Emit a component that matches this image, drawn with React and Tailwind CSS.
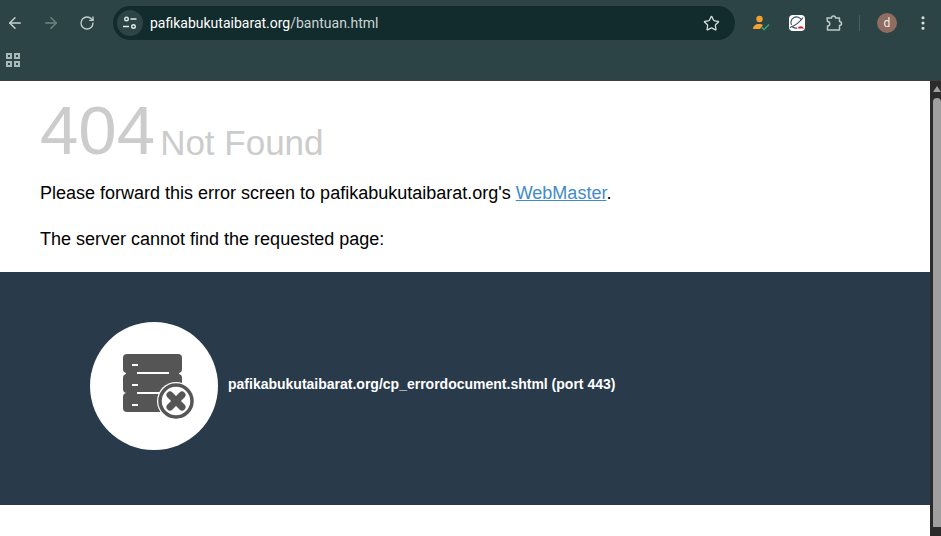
import React from "react";
import { ArrowLeft, ArrowRight, RotateCw, Star, EllipsisVertical } from "lucide-react";

function ServerIcon() {
  return (
    <svg width="72" height="66" viewBox="0 0 72 66" className="block">
      <rect x="0" y="0" width="59" height="19" rx="4" fill="#555555" />
      <rect x="0" y="20" width="59" height="19" rx="4" fill="#555555" />
      <rect x="0" y="39" width="59" height="19" rx="4" fill="#555555" />
      <rect x="3" y="15" width="53" height="8" fill="#555555" />
      <rect x="3" y="35" width="53" height="8" fill="#555555" />
      <rect x="14" y="18" width="32" height="2" fill="#ffffff" />
      <rect x="14" y="38" width="32" height="2" fill="#ffffff" />
      <rect x="9" y="10" width="6" height="2" fill="#ffffff" />
      <rect x="9" y="30" width="6" height="2" fill="#ffffff" />
      <rect x="9" y="50" width="6" height="2" fill="#ffffff" />
      <circle cx="53" cy="47" r="19" fill="#ffffff" />
      <circle cx="53" cy="47" r="16" fill="none" stroke="#555555" strokeWidth="3.5" />
      <path d="M47 41 L59 53 M59 41 L47 53" stroke="#555555" strokeWidth="7" strokeLinecap="round" />
    </svg>
  );
}

export default function App() {
  return (
    <div className="w-[941px] h-[536px] overflow-hidden flex flex-col bg-white font-['Liberation_Sans',Arial,sans-serif]">
      <header className="h-[81px] shrink-0 bg-[#2c4445] border-b border-b-[#3a3f3f] flex flex-col">
        <div className="h-[46px] flex items-center pl-[6px] pr-[8px]">
          <ArrowLeft size={18} strokeWidth={2} className="text-[#c3d0cf]" />
          <ArrowRight size={18} strokeWidth={2} className="text-[#6f8281] ml-[18px]" />
          <RotateCw size={16} strokeWidth={2} className="text-[#c3d0cf] ml-[19px]" />
          <div className="ml-[18px] w-[622px] h-[34px] rounded-full bg-[#122b2c] flex items-center pl-[4px] pr-[15px]">
            <div className="w-[26px] h-[26px] rounded-full bg-[#2c4445] flex items-center justify-center">
              <svg width="14" height="14" viewBox="0 0 14 14" fill="none" stroke="#dfe8e7" strokeWidth="1.4">
                <circle cx="3.5" cy="3" r="1.8" />
                <path d="M7.5 3h6M0 10.5h6" />
                <circle cx="10.5" cy="10.5" r="1.8" />
              </svg>
            </div>
            <div className="ml-[7px] text-[14px] text-[#c9d6d5] font-['Roboto',sans-serif] leading-none">
              <span className="text-white">pafikabukutaibarat.org</span>/bantuan.html
            </div>
            <Star size={17} strokeWidth={1.8} className="text-[#d5dfde] ml-auto" />
          </div>
          <svg width="18" height="18" viewBox="0 0 18 18" className="ml-[17px]">
            <circle cx="7.5" cy="5" r="3.2" fill="#f5a030" />
            <path d="M1 15c0-3 2.5-5 6-5 1.5 0 3 .3 4 1l-3 4z" fill="#f5a030" />
            <path d="M9.5 13l2.5 2.5 5-5" fill="none" stroke="#2fa36b" strokeWidth="1.6" />
          </svg>
          <div className="ml-[19px] w-[16px] h-[16px] rounded-[4px] bg-white flex items-center justify-center overflow-hidden">
            <svg width="16" height="16" viewBox="0 0 16 16" fill="none">
              <path d="M12.5 5A5.5 5.5 0 0 0 2.5 10" stroke="#3c4a63" strokeWidth="1.1" />
              <path d="M3 11.5A5.5 5.5 0 0 0 8 13" stroke="#3c4a63" strokeWidth="1.1" />
              <path d="M1 12.5 C5 11 11 7 14 2.5" stroke="#3c4a63" strokeWidth="1.1" />
              <path d="M8.5 13.5a3.5 3.5 0 0 1 6.5 0z" fill="#d8222c" />
            </svg>
          </div>
          <svg width="18" height="18" viewBox="0 0 18 18" fill="none" stroke="#b9cccb" strokeWidth="1.5" strokeLinejoin="round" className="ml-[20px]">
            <path d="M2 4H6.5a2 2 0 0 1 4 0H14.5V7.5a2 2 0 0 1 0 4V16H2.5V12a2.2 2.2 0 0 0 0-4.5z" />
          </svg>
          <div className="ml-[16px] w-px h-[16px] bg-[#47605f]" />
          <div className="ml-[17px] w-[20px] h-[20px] rounded-full bg-[#8f6d60] flex items-center justify-center text-[12px] text-[#f1e9e6] font-['Roboto',sans-serif]">
            d
          </div>
          <EllipsisVertical size={18} strokeWidth={2.2} className="text-[#d5dfde] ml-[17px]" />
        </div>
        <div className="flex-1 flex items-center pl-[6px] pb-[7px]">
          <div className="grid grid-cols-2 gap-[2px]">
            <div className="w-[6px] h-[6px] border-2 border-[#a9b9b8]" />
            <div className="w-[6px] h-[6px] border-2 border-[#a9b9b8]" />
            <div className="w-[6px] h-[6px] border-2 border-[#a9b9b8]" />
            <div className="w-[6px] h-[6px] border-2 border-[#a9b9b8]" />
          </div>
        </div>
      </header>
      <div className="flex-1 flex min-h-0">
        <main className="flex-1 min-w-0 flex flex-col">
          <div className="h-[191px] px-[40px]">
            <h1 className="text-[35px] text-[#cccccc] leading-[72px] h-[80px] pt-[14px] whitespace-nowrap">
              <span className="text-[69px] mr-[5px]">404</span>
              <span className="relative top-[1px]">Not Found</span>
            </h1>
            <p className="text-[18px] text-black leading-[24px] mt-[20px]">
              Please forward this error screen to pafikabukutaibarat.org's{" "}
              <a className="text-[#428bca] underline">WebMaster</a>.
            </p>
            <p className="text-[18px] text-black leading-[24px] mt-[22px]">The server cannot find the requested page:</p>
          </div>
          <section className="h-[233px] bg-[#293a4a] flex items-start pt-[50px] pl-[90px]">
            <div className="w-[128px] h-[128px] rounded-full bg-white flex items-start pl-[33px] pt-[32px] shrink-0">
              <ServerIcon />
            </div>
            <div className="ml-[10px] mt-[52px] text-[14px] leading-[20px] font-bold text-white">
              pafikabukutaibarat.org/cp_errordocument.shtml (port 443)
            </div>
          </section>
        </main>
        <aside className="w-[11px] shrink-0 bg-[#2b2b2b] flex flex-col items-end">
          <div className="w-full h-[17px] flex items-start justify-end pt-[5px]">
            <div className="w-0 h-0 border-l-[4px] border-r-[4px] border-b-[6px] border-l-transparent border-r-transparent border-b-[#a0a0a0]" />
          </div>
          <div className="w-[8px] h-[429px] bg-[#9f9f9f] rounded-t-[4px]" />
        </aside>
      </div>
    </div>
  );
}
